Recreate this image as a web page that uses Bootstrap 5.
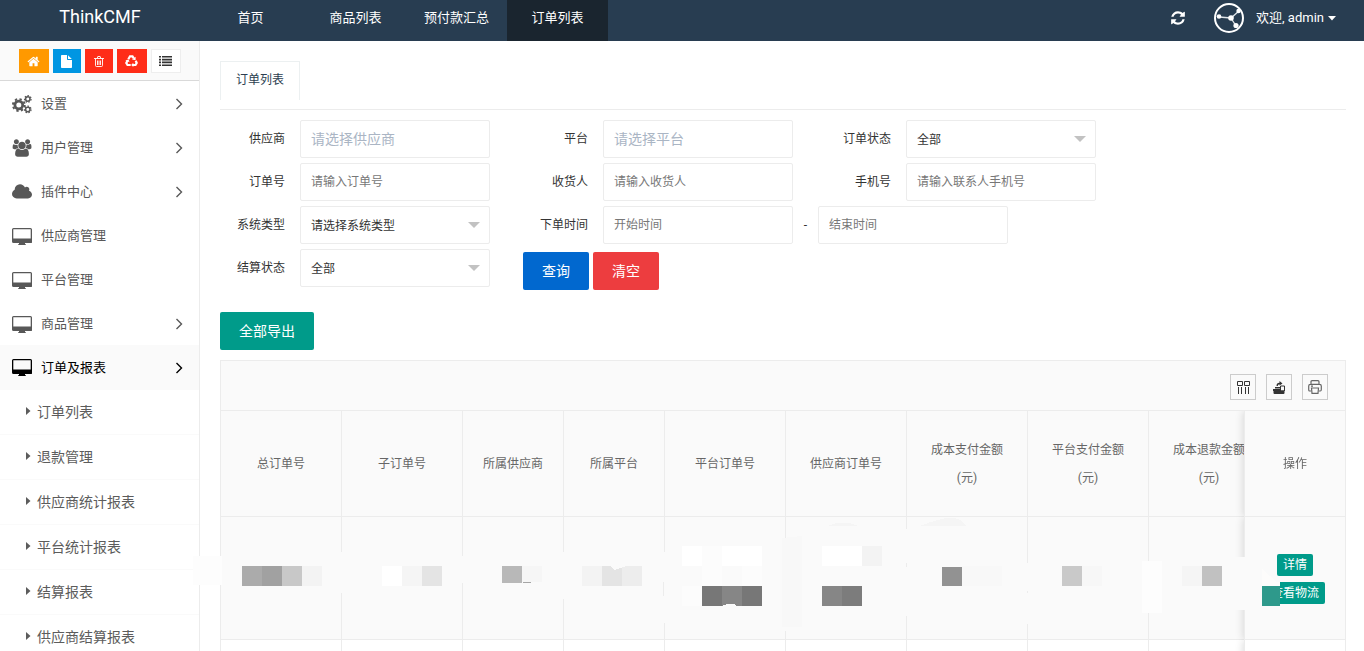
<!DOCTYPE html>
<html lang="zh-CN">
<head>
<meta charset="utf-8">
<meta name="viewport" content="width=device-width, initial-scale=1">
<title>ThinkCMF</title>
<link href="https://cdn.jsdelivr.net/npm/bootstrap@5.3.0/dist/css/bootstrap.min.css" rel="stylesheet">
<style>
  body { font-family: Roboto, "Noto Sans CJK SC", sans-serif; font-size: 13px; color: #333; background: #fff; }
  a { text-decoration: none; }
  svg { display: block; flex: none; }

  .top-bar { background: #283d51; min-height: 41px; flex: none; }
  .top-bar a { color: #fff; }
  .brand-box { width: 200px; font-size: 18px; line-height: 34px; }
  .top-tab { width: 101px; height: 41px; line-height: 36px; text-align: center; }
  .top-tab.active { background: #1a252f; }
  .reload-btn { color: #fff; }
  .user-menu { height: 36px; gap: 12px; padding-right: 28px; }

  .side-bar { width: 200px; flex: none; border-right: 1px solid #ececec; }
  .shortcut-bar { height: 40px; padding-top: 8px; gap: 4px; background: #fafafa; border-bottom: 1px solid #d9d9d9; }
  .shortcut-bar .btn { width: 30px; height: 24px; border-radius: 0; color: #fff; }
  .shortcut-bar .btn.narrow { width: 28px; }
  .sc-orange { background: #ff9900; }
  .sc-blue { background: #0096e2; }
  .sc-red { background: #ff2d18; }
  .shortcut-bar .sc-plain { background: #fff; border: 1px solid #eee; color: #333; }
  .menu-link { height: 44px; padding: 2px 16px 0 12px; gap: 9px; color: #585858; }
  .menu-link.active { height: 45px; padding-top: 0; background: #fafafa; color: #000; }
  .sub-link { height: 45px; padding-left: 26px; gap: 6px; font-size: 14px; color: #5c5c5c; border-bottom: 1px solid #fafafa; }

  .page-main { min-width: 0; padding: 20px 18px 0 20px; font-size: 12px; }
  .page-tabs { height: 49px; border-bottom: 1px solid #ececec; }
  .page-tabs .nav-link, .page-tabs .nav-link.active { height: 39px; padding: 0 15px; line-height: 36px; border: 1px solid #ecf0f1; border-bottom: 0; border-radius: 0; color: #2c3e50; background: #fff; }
  .filters { padding-top: 10px; }
  .filter-row { column-gap: 33px; margin-bottom: 5px; }
  .field-label { width: 80px; padding-right: 15px; text-align: right; color: #333; }
  .field-box, .field-box:focus { width: 190px; height: 38px; padding: 0 10px; font-size: 12px; color: #333; border: 1px solid #ececec; border-radius: 2px; background-color: #fff; box-shadow: none; }
  .field-box::placeholder { color: #777; opacity: 1; }
  .field-box.picker { font-size: 14px; }
  .field-box.picker::placeholder { color: #aab5c4; }
  select.field-box { padding-top: 2px; background-image: url("data:image/svg+xml,%3Csvg xmlns='http://www.w3.org/2000/svg' viewBox='0 0 12 6'%3E%3Cpath d='M0 0h12L6 6z' fill='%23c2c2c2'/%3E%3C/svg%3E"); background-size: 12px 6px; background-position: right 9px center; }
  .range-dash { width: 25px; text-align: center; }
  .act-btn, .act-btn:hover { height: 38px; padding: 0 19px; font-size: 14px; line-height: 38px; color: #fff; border: 0; border-radius: 2px; }
  .act-btn.short-btn { padding: 0; width: 66px; }
  .search-acts { padding-top: 3px; }
  .bg-query, .bg-query:hover { background: #0168cf; }
  .bg-clear, .bg-clear:hover { background: #ed3d3f; }
  .bg-teal, .bg-teal:hover { background: #009b8a; }
  .export-btn { margin-top: 17px; }

  .grid-panel { margin-top: 10px; border: 1px solid #ececec; border-bottom: 0; }
  .grid-tools { height: 50px; padding: 2px 17px 0 0; gap: 10px; background: #fafafa; border-bottom: 1px solid #ececec; }
  .grid-tools .btn { width: 26px; height: 26px; border: 1px solid #ccc; border-radius: 0; color: #333; }
  .order-table { min-width: 1150px; table-layout: fixed; border-collapse: separate; border-spacing: 0; color: #666; text-align: center; }
  .order-table th, .order-table td { padding: 0; font-weight: 400; line-height: 28px; vertical-align: middle; background: #fafafa; border-right: 1px solid #ececec; border-bottom: 1px solid #ececec; }
  .order-table thead th { height: 106px; }
  .order-table td { height: 123px; }
  .order-table .plain-row td { height: 60px; background: #fff; }
  .w-wide { width: 121px; }
  .w-mid { width: 101px; }
  .order-table .pinned { position: sticky; right: 0; border-left: 1px solid #ececec; border-right: 0; box-shadow: -1px 0 8px rgba(0,0,0,.14); clip-path: inset(0 0 0 -12px); }
  .row-acts { gap: 6px; padding-top: 2px; }
  .row-btn, .row-btn:hover { height: 22px; padding: 0 6px; font-size: 12px; line-height: 22px; color: #fff; border: 0; border-radius: 2px; }
  .redaction { position: absolute; left: 0; top: 0; width: 100%; height: 280px; overflow: visible; pointer-events: none; z-index: 2; }
</style>
</head>
<body>
<svg width="0" height="0" class="position-absolute" aria-hidden="true">
  <symbol id="i-desktop" viewBox="0 0 20 17"><path fill="currentColor" fill-rule="evenodd" d="M1.500 0h17Q20 0 20 1.500v13Q20 15 18.500 15H13v1q1 0 1 1H6q0-1 1-1v-1H1.500Q0 15 0 13.500v-12Q0 0 1.500 0zM1.300 1.300v9.200h17.400V1.300z"/></symbol>
  <symbol id="i-chev" viewBox="0 0 8 12"><path d="M1.500 1l5 5-5 5" fill="none" stroke="currentColor" stroke-width="1.400"/></symbol>
  <symbol id="i-tri" viewBox="0 0 5 10"><path d="M0 0l4.500 4L0 8z" fill="currentColor"/></symbol>
</svg>

<div class="vh-100 d-flex flex-column overflow-hidden">
  <header class="top-bar d-flex">
    <a class="brand-box text-center" href="#">ThinkCMF</a>
    <nav class="d-flex flex-grow-1">
      <a class="top-tab me-1" href="#">首页</a>
      <a class="top-tab" href="#">商品列表</a>
      <a class="top-tab" href="#">预付款汇总</a>
      <a class="top-tab active" href="#">订单列表</a>
    </nav>
    <div class="user-menu d-flex align-items-center">
      <button type="button" class="btn p-0 border-0 reload-btn me-3" aria-label="刷新">
        <svg width="16" height="16" viewBox="0 0 1792 1792" fill="currentColor"><path d="M1639 1056q0 5-1 7-64 268-268 434.500t-478 166.500q-146 0-282.500-55t-243.500-157l-129 129q-19 19-45 19t-45-19-19-45v-448q0-26 19-45t45-19h448q26 0 45 19t19 45-19 45l-137 137q71 66 161 102t187 36q134 0 250-65t186-179q11-17 53-117 8-23 30-23h192q13 0 22.500 9.500t9.500 22.500zm25-800v448q0 26-19 45t-45 19h-448q-26 0-45-19t-19-45 19-45l138-138q-148-137-349-137-134 0-250 65t-186 179q-11 17-53 117-8 23-30 23h-199q-13 0-22.500-9.500t-9.500-22.500v-7q65-268 270-434.500t480-166.500q146 0 284 55.500t245 156.500l130-129q19-19 45-19t45 19 19 45z"/></svg>
      </button>
      <a href="#" class="d-flex align-items-center gap-1">
        <svg class="me-2" width="30" height="30" viewBox="0 0 30 30"><circle cx="15" cy="15" r="14" fill="none" stroke="#fff" stroke-width="2"/><path d="M5 14l12 1 8-7M17 15l5 8" fill="none" stroke="#dfe4e8" stroke-width="1.400"/><g fill="#fff"><circle cx="5" cy="13.500" r="2.300"/><circle cx="17" cy="15" r="2.800"/><circle cx="24.500" cy="8" r="2.200"/><circle cx="22" cy="22.500" r="2.600"/></g></svg>
        <span>欢迎, admin</span>
        <svg width="8" height="5" viewBox="0 0 8 5"><path d="M0 0h8L4 4.500z" fill="#fff"/></svg>
      </a>
    </div>
  </header>

  <div class="d-flex flex-grow-1 overflow-hidden">
    <aside class="side-bar overflow-hidden">
      <div class="shortcut-bar d-flex justify-content-center align-items-start">
        <button type="button" class="btn p-0 sc-orange d-flex align-items-center justify-content-center" aria-label="首页"><svg width="13" height="13" viewBox="0 0 1792 1792" fill="currentColor"><path d="M1472 992v480q0 26-19 45t-45 19h-384v-384h-256v384h-384q-26 0-45-19t-19-45v-480q0-1 .5-3t.5-3l575-474 575 474q1 2 1 6zm223-69l-62 74q-8 9-21 11h-3q-13 0-21-7l-692-577-692 577q-12 8-24 7-13-2-21-11l-62-74q-8-10-7-23.500t11-21.500l719-599q32-26 76-26t76 26l244 204v-195q0-14 9-23t23-9h192q14 0 23 9t9 23v408l219 182q10 8 11 21.500t-7 23.500z"/></svg></button>
        <button type="button" class="btn p-0 sc-blue narrow d-flex align-items-center justify-content-center" aria-label="文件"><svg width="11" height="13" viewBox="0 0 11 13" fill="currentColor"><path d="M.8 0H6v4.200q0 .8.800.8H11v7.200q0 .8-.8.800H.8q-.8 0-.8-.8V.8Q0 0 .8 0zM7 .2L10.800 4H7z"/></svg></button>
        <button type="button" class="btn p-0 sc-red narrow d-flex align-items-center justify-content-center" aria-label="删除"><svg width="10" height="11" viewBox="0 0 10 11" fill="none" stroke="currentColor"><path d="M0 2.500h10M3.300 2.300L3.800.5h2.400l.5 1.800M1.500 2.500v7q0 1 1 1h5q1 0 1-1v-7M3.500 4.500V9M5 4.500V9M6.500 4.500V9" stroke-width=".9"/></svg></button>
        <button type="button" class="btn p-0 sc-red d-flex align-items-center justify-content-center" aria-label="清理"><svg width="13" height="12" viewBox="0 0 13 12"><g fill="none" stroke="currentColor" stroke-width="2.200"><path d="M3.300 4.200L5 1.300h2.500l1.300 2"/><path d="M10.700 5.800l1 2.200-1.200 2H8"/><path d="M5.700 10H2.500L1.300 8l1.200-2.200"/></g><path fill="currentColor" d="M10.600 1.800v3.400l-3.600-.7zM8.300 7.800V12L6.200 9.900zM.3 5.300l3.300-.7L4.500 7.300z"/></svg></button>
        <button type="button" class="btn p-0 sc-plain d-flex align-items-center justify-content-center" aria-label="列表"><svg width="13" height="10" viewBox="0 0 13 10" fill="currentColor"><path d="M0 0h2v1.600H0zM3 0h10v1.600H3zM0 2.800h2v1.600H0zM3 2.800h10v1.600H3zM0 5.600h2v1.600H0zM3 5.600h10v1.600H3zM0 8.400h2V10H0zM3 8.400h10V10H3z"/></svg></button>
      </div>
      <nav>
        <a class="menu-link d-flex align-items-center" href="#"><svg width="20" height="20" viewBox="0 0 20 20" fill="none" stroke="currentColor"><circle cx="6.800" cy="11" r="3.900" stroke-width="2.800"/><circle cx="6.800" cy="11" r="5.900" stroke-width="2" stroke-dasharray="2.300 2.330"/><circle cx="15.800" cy="5" r="2.200" stroke-width="1.500"/><circle cx="15.800" cy="5" r="3.300" stroke-width="1.200" stroke-dasharray="1.500 1.460"/><circle cx="15.800" cy="15.500" r="2.200" stroke-width="1.500"/><circle cx="15.800" cy="15.500" r="3.300" stroke-width="1.200" stroke-dasharray="1.500 1.460"/></svg><span class="flex-grow-1">设置</span><svg width="8" height="12"><use href="#i-chev"/></svg></a>
        <a class="menu-link d-flex align-items-center" href="#"><svg width="20" height="18" viewBox="0 0 2048 1792" fill="currentColor"><path d="M657 896q-162 5-265 128h-134q-82 0-138-40.500t-56-118.500q0-353 124-353 6 0 43.500 21t97.500 42.500 119 21.500q67 0 133-23-5 37-5 66 0 159 93 293zm1071 637q0 120-73 189.500t-194 69.500h-874q-121 0-194-69.500t-73-189.500q0-53 3.500-103.500t14-109 26.500-108.500 43-97.500 62-81 85.500-53.500 111.500-20q10 0 43 21.500t73 48 107 48 135 21.500 135-21.500 107-48 73-48 43-21.500q61 0 111.500 20t85.500 53.500 62 81 43 97.500 26.500 108.500 14 109 3.500 103.500zm-1024-1277q0 106-75 181t-181 75-181-75-75-181 75-181 181-75 181 75 75 181zm704 384q0 159-112.500 271.500t-271.500 112.500-271.500-112.500-112.500-271.500 112.500-271.500 271.500-112.500 271.500 112.500 112.500 271.500zm576 225q0 78-56 118.500t-138 40.500h-134q-103-123-265-128 93-134 93-293 0-29-5-66 66 23 133 23 59 0 119-21.500t97.500-42.500 43.500-21q124 0 124 353zm-128-609q0 106-75 181t-181 75-181-75-75-181 75-181 181-75 181 75 75 181z"/></svg><span class="flex-grow-1">用户管理</span><svg width="8" height="12"><use href="#i-chev"/></svg></a>
        <a class="menu-link d-flex align-items-center" href="#"><svg width="20" height="18" viewBox="64 0 1920 1792" preserveAspectRatio="none" fill="currentColor"><path d="M1984 1152q0 159-112.500 271.500t-271.500 112.500h-1088q-185 0-316.500-131.500t-131.500-316.500q0-132 71-241.500t187-163.500q-2-28-2-43 0-212 150-362t362-150q158 0 286.500 88t187.500 230q70-62 166-62 106 0 181 75t75 181q0 75-41 138 129 30 213 134.500t84 239.500z"/></svg><span class="flex-grow-1">插件中心</span><svg width="8" height="12"><use href="#i-chev"/></svg></a>
        <a class="menu-link d-flex align-items-center" href="#"><svg width="20" height="17"><use href="#i-desktop"/></svg><span>供应商管理</span></a>
        <a class="menu-link d-flex align-items-center" href="#"><svg width="20" height="17"><use href="#i-desktop"/></svg><span>平台管理</span></a>
        <a class="menu-link d-flex align-items-center" href="#"><svg width="20" height="17"><use href="#i-desktop"/></svg><span class="flex-grow-1">商品管理</span><svg width="8" height="12"><use href="#i-chev"/></svg></a>
        <a class="menu-link active d-flex align-items-center" href="#"><svg width="20" height="17"><use href="#i-desktop"/></svg><span class="flex-grow-1">订单及报表</span><svg width="8" height="12"><use href="#i-chev"/></svg></a>
        <a class="sub-link d-flex align-items-center" href="#"><svg width="5" height="10"><use href="#i-tri"/></svg>订单列表</a>
        <a class="sub-link d-flex align-items-center" href="#"><svg width="5" height="10"><use href="#i-tri"/></svg>退款管理</a>
        <a class="sub-link d-flex align-items-center" href="#"><svg width="5" height="10"><use href="#i-tri"/></svg>供应商统计报表</a>
        <a class="sub-link d-flex align-items-center" href="#"><svg width="5" height="10"><use href="#i-tri"/></svg>平台统计报表</a>
        <a class="sub-link d-flex align-items-center" href="#"><svg width="5" height="10"><use href="#i-tri"/></svg>结算报表</a>
        <a class="sub-link d-flex align-items-center" href="#"><svg width="5" height="10"><use href="#i-tri"/></svg>供应商结算报表</a>
      </nav>
    </aside>

    <main class="page-main flex-grow-1">
      <div class="page-tabs nav nav-tabs border-top-0 border-start-0 border-end-0"><a class="nav-link active" href="#">订单列表</a></div>

      <form class="filters">
        <div class="filter-row d-flex">
          <div class="d-flex align-items-center"><label class="field-label" for="f1">供应商</label><input id="f1" class="form-control field-box picker" placeholder="请选择供应商"></div>
          <div class="d-flex align-items-center"><label class="field-label" for="f2">平台</label><input id="f2" class="form-control field-box picker" placeholder="请选择平台"></div>
          <div class="d-flex align-items-center"><label class="field-label" for="f3">订单状态</label><select id="f3" class="form-select field-box"><option>全部</option></select></div>
        </div>
        <div class="filter-row d-flex">
          <div class="d-flex align-items-center"><label class="field-label" for="f4">订单号</label><input id="f4" class="form-control field-box" placeholder="请输入订单号"></div>
          <div class="d-flex align-items-center"><label class="field-label" for="f5">收货人</label><input id="f5" class="form-control field-box" placeholder="请输入收货人"></div>
          <div class="d-flex align-items-center"><label class="field-label" for="f6">手机号</label><input id="f6" class="form-control field-box" placeholder="请输入联系人手机号"></div>
        </div>
        <div class="filter-row d-flex">
          <div class="d-flex align-items-center"><label class="field-label" for="f7">系统类型</label><select id="f7" class="form-select field-box"><option>请选择系统类型</option></select></div>
          <div class="d-flex align-items-center"><label class="field-label" for="f8">下单时间</label><input id="f8" class="form-control field-box" placeholder="开始时间"><span class="range-dash">-</span><input class="form-control field-box" aria-label="结束时间" placeholder="结束时间"></div>
        </div>
        <div class="filter-row d-flex align-items-start">
          <div class="d-flex align-items-center"><label class="field-label" for="f9">结算状态</label><select id="f9" class="form-select field-box"><option>全部</option></select></div>
          <div class="search-acts d-flex gap-1"><button type="button" class="btn act-btn short-btn bg-query">查询</button><button type="button" class="btn act-btn short-btn bg-clear">清空</button></div>
        </div>
      </form>

      <button type="button" class="btn act-btn bg-teal export-btn">全部导出</button>

      <section class="grid-panel position-relative">
        <div class="grid-tools d-flex align-items-center justify-content-end">
          <button type="button" class="btn p-0 d-flex align-items-center justify-content-center" aria-label="筛选列"><svg width="14" height="14" viewBox="0 0 14 14" fill="none" stroke="currentColor"><path d="M1.500 1.500h5v4h-5zM8.500 1.500h5v4h-5zM2.500 7v7M5.500 7v7M9.500 7v7M12.500 7v7"/></svg></button>
          <button type="button" class="btn p-0 d-flex align-items-center justify-content-center" aria-label="导出"><svg width="14" height="14" viewBox="0 0 14 14" fill="currentColor"><path d="M1.500 10.500h11V13q0 1-1 1h-9q-1 0-1-1zM1 9h8v1.200h4V11H1zM3 7h5v1.500H3z"/><path d="M8.500 9.500V6h4v5" fill="none" stroke="currentColor"/><path d="M4.500 6Q4.500 2.800 7.500 2.800V1l3 2.500-3 2V4.200Q5.800 4.200 5.800 6z"/></svg></button>
          <button type="button" class="btn p-0 d-flex align-items-center justify-content-center" aria-label="打印"><svg width="14" height="14" viewBox="0 0 14 14" fill="none" stroke="#666" stroke-width="1.200"><path d="M3 4V1.700Q3 .7 4 .7h6q1 0 1 1V4M3 11H1.700Q.7 11 .7 9.500V6Q.7 4.300 2.500 4.300h9q1.800 0 1.800 1.700v3.500q0 1.500-1 1.500H11M3.500 8h7l-.5 5.300H4zM3 6.200h2"/></svg></button>
        </div>
        <div class="overflow-hidden">
          <table class="order-table w-100">
            <colgroup><col class="w-wide"><col class="w-wide"><col class="w-mid"><col class="w-mid"><col class="w-wide"><col class="w-wide"><col class="w-wide"><col class="w-wide"><col class="w-wide"><col class="w-mid"></colgroup>
            <thead><tr>
              <th>总订单号</th><th>子订单号</th><th>所属供应商</th><th>所属平台</th><th>平台订单号</th><th>供应商订单号</th><th>成本支付金额<br>(元)</th><th>平台支付金额<br>(元)</th><th>成本退款金额<br>(元)</th><th class="pinned">操作</th>
            </tr></thead>
            <tbody>
              <tr><td></td><td></td><td></td><td></td><td></td><td></td><td></td><td></td><td></td>
                <td class="pinned"><div class="row-acts d-flex flex-column align-items-center"><button type="button" class="btn row-btn bg-teal">详情</button><button type="button" class="btn row-btn bg-teal">查看物流</button></div></td></tr>
              <tr class="plain-row"><td></td><td></td><td></td><td></td><td></td><td></td><td></td><td></td><td></td><td class="pinned"></td></tr>
            </tbody>
          </table>
        </div>
        <!-- order values are masked with mosaic blocks -->
        <svg class="redaction" aria-hidden="true" shape-rendering="crispEdges">
          <g fill="#fafafa"><path d="M115 191h12v41h-12zM236 195h12v27h-12zM337 191h12v47h-12zM438 191h12v71h-12zM559 177h12v93h-12zM680 168h12v87h-12zM801 202h12v61h-12zM1014 196h10v53h-10z"/></g>
          <g fill="#fdfdfd"><path d="M-28 195h9v29h-9zM-19 195h20v29h-20zM921 200h20v52h-20z"/></g>
          <path fill="#ececec" d="M442 221h1v14h-1zM685 202h1v4h-1zM806 230h1v2h-1z"/>
          <path fill="#f8f8f8" d="M561 177l20-2v91h-20z"/>
          <path fill="#f5f5f5" d="M607 165q15-7 30 0zM699 165q20-8 30-8 12 0 16 8z"/>
          <path fill="#ababab" d="M21 205h20v20H21z"/><path fill="#a1a1a1" d="M41 205h20v20H41z"/><path fill="#c8c8c8" d="M61 205h20v20H61z"/><path fill="#f3f3f3" d="M81 205h20v20H81z"/>
          <path fill="#fff" d="M161 205h20v20h-20z"/><path fill="#f5f5f5" d="M181 205h20v20h-20z"/><path fill="#e4e4e4" d="M201 205h20v20h-20z"/>
          <path fill="#b8b8b8" d="M281 205h20v17h-20z"/><path fill="#f6f6f6" d="M301 205h20v16h-20z"/><path fill="#a5a5a5" d="M302 221h8v1h-8z"/>
          <path fill="#f3f3f3" d="M361 205h20v20h-20z"/><path fill="#e4e4e4" d="M381 205h20v20h-20z"/><path fill="#ededed" d="M401 205h20v20h-20z"/><path fill="#fafafa" d="M389 205h16l-11 4z"/>
          <path fill="#fff" d="M461 185h20v20h-20zM501 185h40v20h-40z"/><path fill="#fcfcfc" d="M481 185h20v20h-20zM481 205h20v20h-20zM521 205h20v20h-20zM461 225h20v20h-20z"/>
          <path fill="#777" d="M481 225h20v20h-20zM521 225h20v20h-20z"/><path fill="#868686" d="M501 225h20v20h-20z"/><path fill="#fafafa" d="M501 245q2-2 12-2l3 2z"/>
          <path fill="#fff" d="M601 185h40v20h-40z"/><path fill="#f3f3f3" d="M641 185h20v20h-20z"/><path fill="#868686" d="M601 225h20v20h-20z"/><path fill="#7c7c7c" d="M621 225h20v20h-20z"/>
          <path fill="#929292" d="M721 206h20v19h-20z"/><path fill="#f8f8f8" d="M741 205h40v20h-40z"/>
          <path fill="#c9c9c9" d="M841 205h20v20h-20z"/><path fill="#f7f7f7" d="M861 205h20v20h-20z"/>
          <path fill="#f5f5f5" d="M961 205h20v20h-20z"/><path fill="#c1c1c1" d="M981 205h20v20h-20z"/>
          <path fill="#fdfcfb" d="M1041 208l15 13h3v4h-18z"/><path fill="#2e998b" d="M1041 225h18v20h-18z"/>
        </svg>
      </section>
    </main>
  </div>
</div>
<script src="https://cdn.jsdelivr.net/npm/bootstrap@5.3.0/dist/js/bootstrap.bundle.min.js"></script>
</body>
</html>
